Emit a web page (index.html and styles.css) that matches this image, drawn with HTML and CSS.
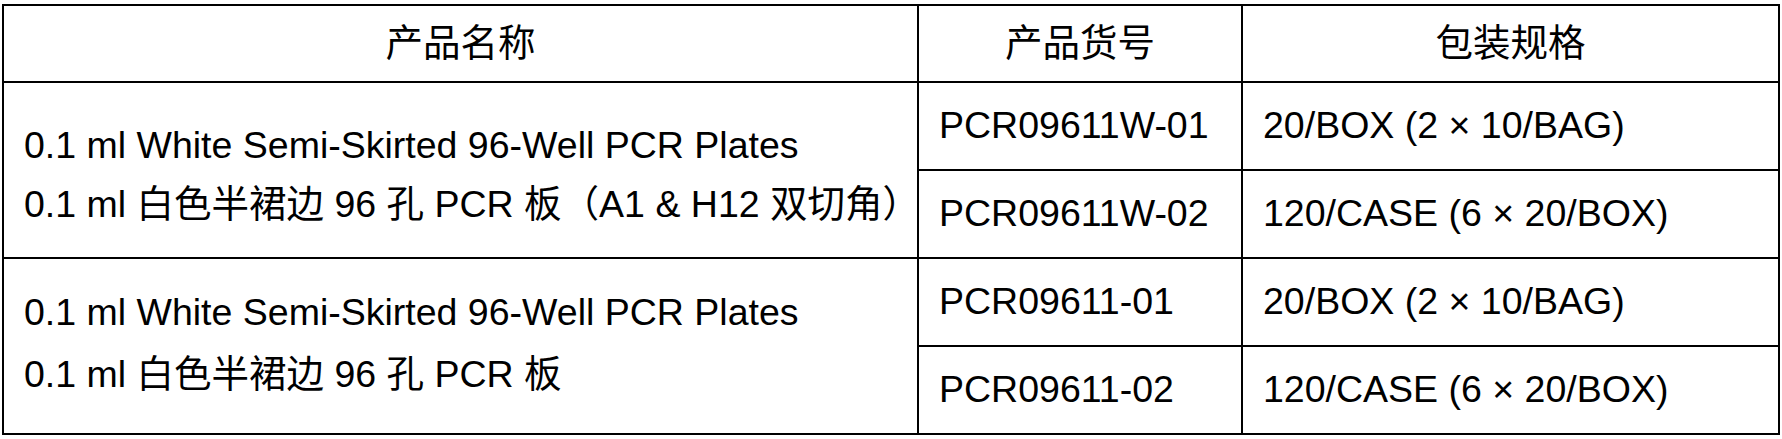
FILE: index.html
```html
<!DOCTYPE html>
<html lang="zh">
<head>
<meta charset="utf-8">
<link rel="stylesheet" href="styles.css">
</head>
<body>
<div class="wrap">
<table class="spec">
  <colgroup>
    <col class="c1"><col class="c2"><col class="c3">
  </colgroup>
  <thead>
    <tr class="head"><th>产品名称</th><th>产品货号</th><th>包装规格</th></tr>
  </thead>
  <tbody>
    <tr class="r1">
      <td rowspan="2" class="name g1"><div class="ln">0.1 ml White Semi-Skirted 96-Well PCR Plates</div><div class="ln">0.1 ml 白色半裙边 96 孔 PCR 板（A1 &amp; H12 双切角）</div></td>
      <td class="code">PCR09611W-01</td><td class="pack">20/BOX (2 × 10/BAG)</td>
    </tr>
    <tr class="r2">
      <td class="code">PCR09611W-02</td><td class="pack">120/CASE (6 × 20/BOX)</td>
    </tr>
    <tr class="r1">
      <td rowspan="2" class="name g2"><div class="ln">0.1 ml White Semi-Skirted 96-Well PCR Plates</div><div class="ln">0.1 ml 白色半裙边 96 孔 PCR 板</div></td>
      <td class="code">PCR09611-01</td><td class="pack">20/BOX (2 × 10/BAG)</td>
    </tr>
    <tr class="r2">
      <td class="code">PCR09611-02</td><td class="pack">120/CASE (6 × 20/BOX)</td>
    </tr>
  </tbody>
</table>
</div>
</body>
</html>
```
FILE: styles.css
```css
html, body { margin: 0; padding: 0; background: #fff; }
.wrap { padding: 4px 4px 0 2px; }
.spec {
  border-collapse: collapse;
  table-layout: fixed;
  width: 1776px;
  font-family: "Liberation Sans", Arial, "Noto Sans CJK SC", sans-serif;
  font-size: 37.5px;
  color: #000;
}
.c1 { width: 915px; }
.c2 { width: 324px; }
.c3 { width: 537px; }
.spec th, .spec td {
  border: 2px solid #000;
  padding: 0 0 0 20px;
  vertical-align: middle;
  text-align: left;
  font-weight: normal;
  line-height: 1.15;
  white-space: nowrap;
}
.spec th { text-align: center; padding: 0; height: 75px; }
.r1 td, .r2 td { height: 86px; }
.spec .g1 { padding-top: 10px; }
.g1 .ln { line-height: 59px; }
.spec .g2 { padding-bottom: 6px; }
.g2 .ln { line-height: 62px; }
.spec .code { padding-left: 20px; }
.spec .pack { padding-left: 20px; }
```
